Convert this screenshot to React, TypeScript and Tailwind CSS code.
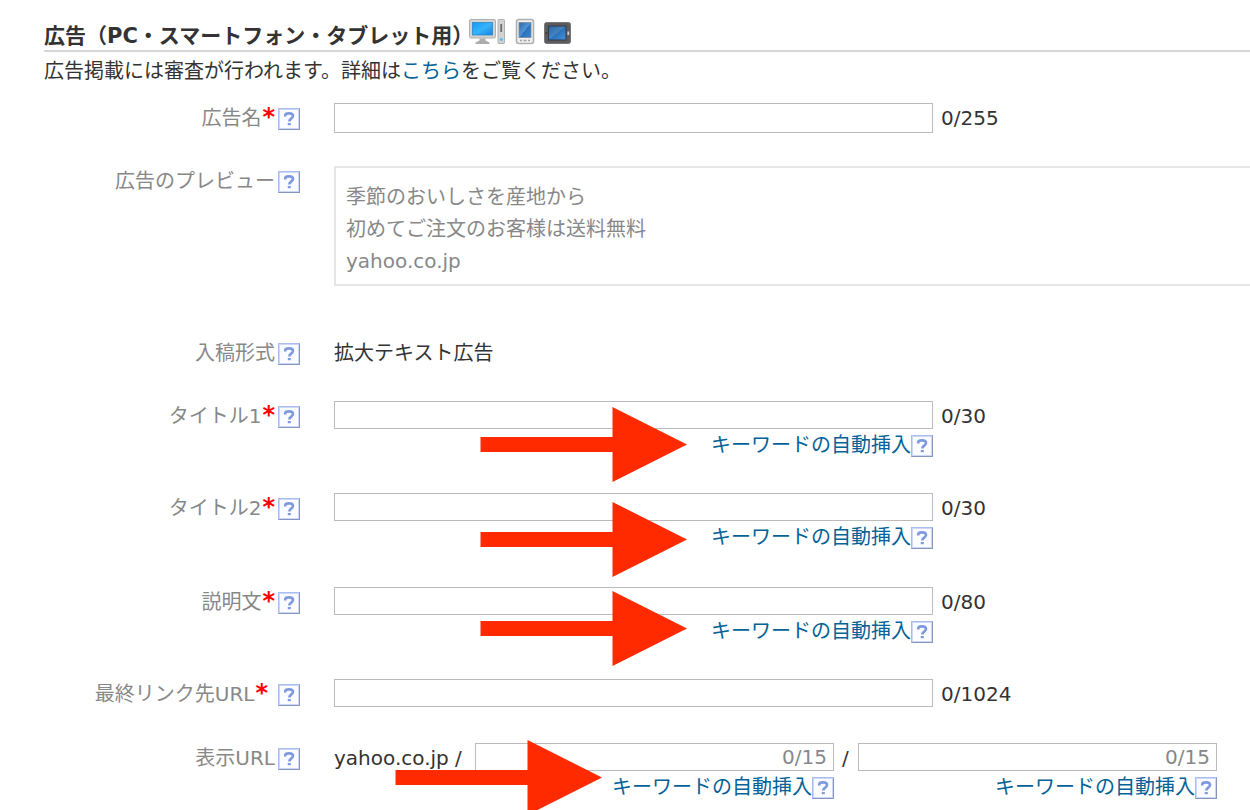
import type { ReactNode } from 'react';

function HelpButton({ topic }: { topic: string }) {
  return (
    <button
      type="button"
      aria-label={`${topic} ヘルプ`}
      className="mt-0.5 flex size-[22px] shrink-0 items-center justify-center border border-t-[#a9bdf0] border-r-[#8794bd] border-b-[#8794bd] border-l-[#a9bdf0] bg-[#fbfcff] shadow-[inset_0_0_0_1px_#ccd8f5]"
    >
      <svg viewBox="0 0 18 18" className="size-[18px]" fill="none" aria-hidden="true">
        <path d="M5.200 6.600V5.500C5.200 4 6.800 3.400 9 3.400s4 0.800 4 2.700c0 2.600-3.700 2.500-3.700 5.400" stroke="#7f99e0" strokeWidth="2.600" />
        <path d="M7.800 13h3v2.200h-3z" fill="#7f99e0" />
      </svg>
    </button>
  );
}

function Arrow({ className }: { className: string }) {
  return (
    <svg
      viewBox="0 0 208 75"
      className={`pointer-events-none absolute h-[75px] w-[208px] ${className}`}
      aria-hidden="true"
    >
      <path d="M0.500 30H132.500V0L207 37.500 132.500 75V45H0.500Z" fill="#ff2a00" />
    </svg>
  );
}

function KeywordInsertion({ arrow }: { arrow?: string }) {
  return (
    <div className="relative flex h-8 items-center justify-end">
      <a href="#keyword" className="text-[#036297]">キーワードの自動挿入</a>
      <HelpButton topic="キーワードの自動挿入" />
      {arrow && <Arrow className={arrow} />}
    </div>
  );
}

type RowProps = {
  label: string;
  id?: string;
  required?: boolean;
  spaced?: boolean;
  className: string;
  children: ReactNode;
};

function Row({ label, id, required, spaced, className, children }: RowProps) {
  const text = (
    <>
      {label}
      {required && <span className="ml-px text-[24px] leading-none font-bold text-[#ff0000]">*</span>}
    </>
  );
  return (
    <div className={`flex items-start gap-[34px] ${className}`}>
      <div
        className={`flex h-[30px] w-[300px] shrink-0 items-center justify-end text-[#888] ${
          spaced ? 'gap-2.5' : 'gap-[3px]'
        }`}
      >
        {id ? <label htmlFor={id}>{text}</label> : <span>{text}</span>}
        <HelpButton topic={label} />
      </div>
      {children}
    </div>
  );
}

const inputClass = 'block w-full border border-[#bbb] bg-white px-1.5 outline-none';

type FieldProps = { id: string; limit: number; tall?: boolean; arrow?: string };

function Field({ id, limit, tall, arrow }: FieldProps) {
  return (
    <div className="flex min-w-0 gap-2">
      <div className="w-[599px] min-w-0">
        <input id={id} type="text" className={`${inputClass} ${tall ? 'h-[30px]' : 'h-7'}`} />
        {arrow && <KeywordInsertion arrow={arrow} />}
      </div>
      <span className="h-[30px] leading-[30px]">0/{limit}</span>
    </div>
  );
}

function PathField({ label, arrow }: { label: string; arrow?: string }) {
  return (
    <div className="w-[359px] min-w-0">
      <input
        type="text"
        aria-label={label}
        placeholder="0/15"
        className={`${inputClass} h-7 text-right placeholder:text-[#888]`}
      />
      <KeywordInsertion arrow={arrow} />
    </div>
  );
}

function PcIcon() {
  return (
    <svg viewBox="0 0 37 27" className="h-[27px] w-[37px]" aria-hidden="true">
      <defs>
        <linearGradient id="pc" x1="0" y1="0" x2="1" y2="1">
          <stop offset="0" stopColor="#1596f5" />
          <stop offset="0.500" stopColor="#36b4fb" />
          <stop offset="1" stopColor="#1283e6" />
        </linearGradient>
      </defs>
      <rect x="0.500" y="1.500" width="26" height="18.500" rx="1.500" fill="#d2d2d2" stroke="#b0b0b0" />
      <rect x="3.500" y="4.500" width="20" height="12.500" fill="url(#pc)" stroke="#2f88c4" strokeWidth="0.800" />
      <path d="M10.500 20.500h6v2l4 2v1.500H6.500v-1.500l4-2z" fill="#adadad" />
      <rect x="29" y="1.500" width="6.500" height="24" rx="0.800" fill="#d2d2d2" stroke="#b0b0b0" />
      <path d="M32.200 6v8" stroke="#6d6d6d" strokeWidth="1.800" />
      <circle cx="32.300" cy="21.500" r="1.400" fill="#4dbdf0" />
    </svg>
  );
}

function PhoneIcon() {
  return (
    <svg viewBox="0 0 20 27" className="h-[27px] w-5" aria-hidden="true">
      <defs>
        <linearGradient id="phone" x1="0" y1="0" x2="1" y2="1">
          <stop offset="0" stopColor="#2968ad" />
          <stop offset="0.500" stopColor="#5595d3" />
          <stop offset="0.520" stopColor="#2b72ba" />
          <stop offset="1" stopColor="#3a86cf" />
        </linearGradient>
      </defs>
      <rect x="1.500" y="1.500" width="17" height="24" rx="2.500" fill="#f0f0f0" stroke="#b0b0b0" strokeWidth="1.600" />
      <rect x="4" y="4.500" width="12" height="15" fill="url(#phone)" stroke="#77899b" strokeWidth="0.800" />
      <path d="M5 22.500h2M8.500 22.500h3M13 22.500h2" stroke="#a3a3a3" strokeWidth="1.500" />
    </svg>
  );
}

function TabletIcon() {
  return (
    <svg viewBox="0 0 27 27" className="size-[27px]" aria-hidden="true">
      <defs>
        <linearGradient id="tablet" x1="0" y1="0" x2="1" y2="1">
          <stop offset="0" stopColor="#2d669f" />
          <stop offset="0.490" stopColor="#4683bf" />
          <stop offset="0.510" stopColor="#2872bb" />
          <stop offset="1" stopColor="#4693de" />
        </linearGradient>
      </defs>
      <rect x="0.500" y="4.500" width="26" height="21" rx="2" fill="#5c5c5f" stroke="#77777a" />
      <rect x="4.500" y="8" width="17.500" height="14" fill="url(#tablet)" stroke="#343a43" />
      <path d="M24.300 13.500v3.500" stroke="#ccc" strokeWidth="1.800" />
      <circle cx="2.500" cy="15" r="0.800" fill="#222" />
    </svg>
  );
}

export default function App() {
  return (
    <main className="min-h-screen overflow-hidden bg-white pt-[18px] font-['DejaVu_Sans','Noto_Sans_CJK_JP',sans-serif] text-[20px] leading-[30px] text-[#333]">
      <header className="ml-[44px] flex h-[34px] items-start border-b-2 border-[#d6d6d6]">
        <h1 className="mt-[3px] shrink-0 text-[21px] font-bold whitespace-nowrap">広告（PC・スマートフォン・タブレット用）</h1>
        <div className="-ml-1 flex gap-[9px]">
          <PcIcon />
          <PhoneIcon />
          <TabletIcon />
        </div>
      </header>
      <p className="mt-1 ml-[44px]">
        広告掲載には審査が行われます。詳細は
        <a href="#details" className="text-[#036297]">こちら</a>
        をご覧ください。
      </p>

      <form className="mt-[17px]">
        <Row label="広告名" id="ad-name" required className="min-h-[63px]">
          <Field id="ad-name" limit={255} tall />
        </Row>
        <Row label="広告のプレビュー" className="min-h-[172px]">
          <div className="flex-1 border-2 border-r-0 border-[#e5e5e5] px-2.5 pt-[13px] pb-[7px] leading-8 text-[#888]">
            <p>季節のおいしさを産地から</p>
            <p>初めてご注文のお客様は送料無料</p>
            <p>yahoo.co.jp</p>
          </div>
        </Row>
        <Row label="入稿形式" className="min-h-[63px]">
          <span>拡大テキスト広告</span>
        </Row>
        <Row label="タイトル1" id="title-1" required className="min-h-[92px]">
          <Field id="title-1" limit={30} arrow="left-[146px] top-[-22px]" />
        </Row>
        <Row label="タイトル2" id="title-2" required className="min-h-[94px]">
          <Field id="title-2" limit={30} arrow="left-[146px] top-[-19px]" />
        </Row>
        <Row label="説明文" id="description" required className="min-h-[92px]">
          <Field id="description" limit={80} arrow="left-[146px] top-[-24px]" />
        </Row>
        <Row label="最終リンク先URL" id="final-url" required spaced className="min-h-[64px]">
          <Field id="final-url" limit={1024} />
        </Row>
        <Row label="表示URL" className="">
          <div className="flex min-w-0 gap-2">
            <span className="w-[133px] shrink-0 whitespace-nowrap">yahoo.co.jp /</span>
            <PathField label="表示URL パス1" arrow="left-[-80px] top-[-31px]" />
            <span className="w-2">/</span>
            <PathField label="表示URL パス2" />
          </div>
        </Row>
      </form>
    </main>
  );
}
